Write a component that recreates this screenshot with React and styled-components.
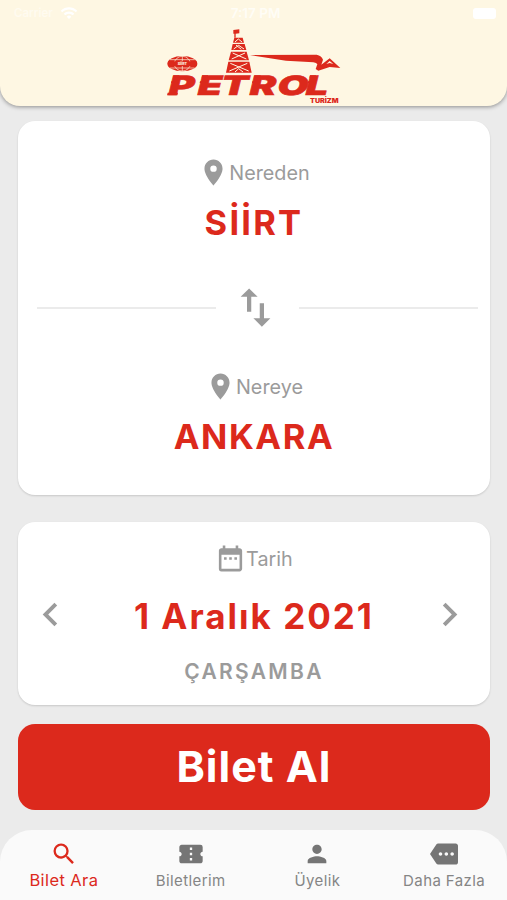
import { useState } from "react";
import styled, { createGlobalStyle } from "styled-components";
import {
  MdChevronLeft,
  MdChevronRight,
  MdConfirmationNumber,
  MdDateRange,
  MdImportExport,
  MdLocationOn,
  MdMore,
  MdPerson,
  MdSearch,
  MdWifi,
} from "react-icons/md";

const GlobalStyle = createGlobalStyle`
  * {
    box-sizing: border-box;
  }
  body {
    margin: 0;
    background-color: #ebebeb;
    font-family: Inter, "Liberation Sans", sans-serif;
  }
  button {
    border: none;
    padding: 0;
    background: none;
    font-family: inherit;
    cursor: pointer;
  }
  svg {
    display: block;
    flex-shrink: 0;
  }
`;

const Screen = styled.div`
  display: flex;
  flex-direction: column;
  height: 900px;
  overflow: hidden;
  background-color: #ebebeb;
`;
const Header = styled.header`
  display: flex;
  flex-direction: column;
  align-items: center;
  height: 106px;
  background-color: #fef7e3;
  border-radius: 0 0 20px 20px;
  box-shadow: 0 1px 4px rgba(0, 0, 0, 0.4);
`;
const StatusBar = styled.div`
  display: grid;
  grid-template-columns: 1fr auto 1fr;
  align-items: center;
  width: 100%;
  height: 28px;
  padding: 0 10px 2px 14px;
  color: #fffdf6;
  font-size: 13.5px;
  font-weight: 600;
`;
const Carrier = styled.div`
  display: flex;
  align-items: center;
  gap: 7px;
  font-size: 11.5px;
  color: #fffbf0;
`;
const Battery = styled.span`
  justify-self: end;
  width: 23px;
  height: 11px;
  margin-right: 1px;
  border-radius: 3px;
  background-color: #ffffff;
`;
const LogoSvg = styled.svg`
  overflow: visible;
`;
const Main = styled.main`
  flex: 1;
  display: flex;
  flex-direction: column;
  padding: 14.5px 17.5px 0 18.4px;
`;
const Card = styled.section`
  display: flex;
  flex-direction: column;
  align-items: center;
  height: ${({ $height }) => $height}px;
  margin-bottom: ${({ $gap }) => $gap}px;
  padding-top: ${({ $top }) => $top}px;
  background-color: #ffffff;
  border-radius: 17px;
  box-shadow: 0 1px 2px rgba(0, 0, 0, 0.15);
`;
const Label = styled.div`
  display: flex;
  align-items: center;
  height: 31px;
  color: #9b9b9b;
  font-size: 19.8px;
`;
const City = styled.div`
  margin-top: 13.5px;
  height: 42px;
  line-height: 42px;
  color: #dc291c;
  font-size: 34.5px;
  font-weight: 700;
  letter-spacing: ${({ $spacing }) => $spacing}px;
`;
const SwapRow = styled.div`
  display: flex;
  align-items: center;
  gap: 14px;
  width: 100%;
  margin: 38.5px 0 38px;
  padding: 0 12px 0 19px;
  color: #9b9b9b;
`;
const SwapButton = styled.button`
  padding-right: 4px;
`;
const Line = styled.span`
  flex: 1;
  height: 2px;
  background-color: #ebebeb;
`;
const DateRow = styled.div`
  display: flex;
  align-items: center;
  justify-content: space-between;
  width: 100%;
  height: 44px;
  margin-top: 20px;
  padding: 0 17px 0 9px;
`;
const Arrow = styled.button`
  height: 47px;
  margin-bottom: 4px;
  color: #9b9b9b;
`;
const DateText = styled.span`
  padding-left: 8px;
  color: #dc291c;
  font-size: 35px;
  font-weight: 700;
  letter-spacing: 2px;
`;
const Weekday = styled.div`
  margin-top: 21px;
  height: 26px;
  line-height: 26px;
  color: #9b9b9b;
  font-size: 21px;
  font-weight: 600;
  letter-spacing: 2.3px;
`;
const BuyButton = styled.button`
  height: 86px;
  padding-bottom: 2px;
  border-radius: 17px;
  background-color: #dc291c;
  color: #ffffff;
  font-size: 43px;
  font-weight: 700;
  letter-spacing: 1px;
`;
const Nav = styled.nav`
  display: grid;
  grid-template-columns: repeat(4, 1fr);
  height: 70.5px;
  background-color: #fafafa;
  border-radius: 32px 32px 0 0;
`;
const NavItem = styled.button`
  display: flex;
  flex-direction: column;
  align-items: center;
  padding: 10px 0 0 1px;
  color: ${({ $active }) => ($active ? "#dc291c" : "#757575")};
`;
const NavLabel = styled.span`
  margin-top: ${({ $active }) => ($active ? 2 : 3.5)}px;
  line-height: 20px;
  font-size: ${({ $active }) => ($active ? 16.5 : 15)}px;
  letter-spacing: 0.4px;
  color: ${({ $active }) => ($active ? "#dc291c" : "#858585")};
`;

const Logo = () => (
  <LogoSvg width="175" height="77" viewBox="50 24 525 231" fill="#dc291c">
    {/* globe badge */}
    <ellipse cx="99" cy="131" rx="45" ry="23" />
    <g fill="none" stroke="#fef7e3" strokeWidth="2">
      <ellipse cx="99" cy="131" rx="24" ry="22" />
      <path d="M99 108V154M62 119H136M62 144H136" />
    </g>
    <rect x="56" y="124" width="86" height="14" />
    <text
      x="99"
      y="135"
      textAnchor="middle"
      fill="#fef7e3"
      fontFamily="Inter, sans-serif"
      fontSize="11"
      fontWeight="800"
    >
      SİİRT
    </text>
    {/* derrick */}
    <path d="M252 30L270 28V40L259 41V53H255V41H252Z" />
    <path d="M255 53H280L284 68H251Z" />
    <path d="M250 72H286L291 90H246Z" />
    <path d="M245 95H292L299 121H238Z" />
    <path d="M237 125H300L307 158H230Z" />
    <g fill="none" stroke="#fef7e3" strokeWidth="3">
      <path d="M257 66L267 57L278 66" />
      <path d="M253 87L268 76L284 87M260 75L276 88" />
      <path d="M247 117L287 99M250 99L291 117" />
      <path d="M240 153L294 130M243 130L298 153M257 156L268 146L281 156" />
    </g>
    {/* road line and arrow */}
    <path d="M302 105L502 104Q517 107 521 119L516 134L541 115L573 144L541 141L507 152L499 147L504 133Q502 128 492 127L410 122Z" />
    <path d="M531 132L541 123L552 132L541 129Z" fill="#fef7e3" />
    <text
      transform="translate(52 225) skewX(-14) scale(1.5 1)"
      x="0 58 105 162 218 274"
      fontFamily="Inter, sans-serif"
      fontWeight="900"
      fontSize="80"
      stroke="#dc291c"
      strokeWidth="1.5"
    >
      PETROL
    </text>
    {/* speed streaks */}
    <path d="M73 166H90V173H71ZM66 184H84V189H65ZM55 218H86L84 226H53ZM159 166H176V173H157ZM152 184H168V189H151ZM316 166H334V173H314ZM309 184H326V189H308ZM482 166H500L498 173H480ZM476 184H492V189H475Z" />
    <text
      x="482"
      y="250"
      fontFamily="Inter, sans-serif"
      fontSize="19"
      fontWeight="900"
      textLength="86"
      lengthAdjust="spacingAndGlyphs"
    >
      TURİZM
    </text>
  </LogoSvg>
);

const tabs = [
  { name: "Bilet Ara", Icon: MdSearch },
  { name: "Biletlerim", Icon: MdConfirmationNumber },
  { name: "Üyelik", Icon: MdPerson },
  { name: "Daha Fazla", Icon: MdMore },
];

const App = () => {
  const [active, setActive] = useState("Bilet Ara");
  const [cities, setCities] = useState(["SİİRT", "ANKARA"]);

  return (
    <Screen>
      <GlobalStyle />
      <Header>
        <StatusBar>
          <Carrier>
            <span>Carrier</span>
            <MdWifi size={18} color="#ffffff" />
          </Carrier>
          <span>7:17 PM</span>
          <Battery />
        </StatusBar>
        <Logo />
      </Header>
      <Main>
        <Card $height={374} $gap={27.5} $top={36.5}>
          <Label>
            <MdLocationOn size={31} />
            Nereden
          </Label>
          <City $spacing={2.2}>{cities[0]}</City>
          <SwapRow>
            <Line />
            <SwapButton onClick={() => setCities([cities[1], cities[0]])}>
              <MdImportExport size={51} color="#9b9b9b" />
            </SwapButton>
            <Line />
          </SwapRow>
          <Label>
            <MdLocationOn size={31} />
            Nereye
          </Label>
          <City $spacing={1.6}>{cities[1]}</City>
        </Card>
        <Card $height={182.5} $gap={19} $top={21}>
          <Label>
            <MdDateRange size={31} />
            Tarih
          </Label>
          <DateRow>
            <Arrow>
              <MdChevronLeft size={47} />
            </Arrow>
            <DateText>1 Aralık 2021</DateText>
            <Arrow>
              <MdChevronRight size={47} />
            </Arrow>
          </DateRow>
          <Weekday>ÇARŞAMBA</Weekday>
        </Card>
        <BuyButton>Bilet Al</BuyButton>
      </Main>
      <Nav>
        {tabs.map(({ name, Icon }) => (
          <NavItem
            key={name}
            $active={active === name}
            onClick={() => setActive(name)}
          >
            <Icon size={28} />
            <NavLabel $active={active === name}>{name}</NavLabel>
          </NavItem>
        ))}
      </Nav>
    </Screen>
  );
};

export default App;
